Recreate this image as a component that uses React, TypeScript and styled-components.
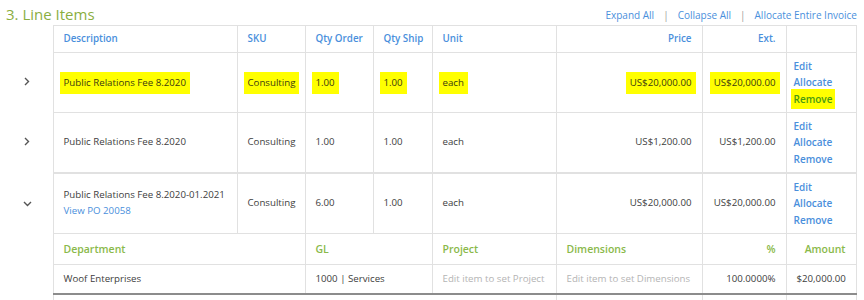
import React from 'react';
import styled, { createGlobalStyle } from 'styled-components';

const Global = createGlobalStyle`
  html, body { margin: 0; padding: 0; background: #fff; }
  body {
    font-family: "Open Sans", "Noto Sans", sans-serif;
    color: #3d3d3d;
    width: 864px;
    height: 300px;
    overflow: hidden;
  }
`;

const Page = styled.div`
  width: 864px;
`;

const TitleBar = styled.div`
  display: flex;
  justify-content: space-between;
  align-items: flex-end;
  height: 25px;
  padding: 0 7px 0 6px;
  box-sizing: border-box;
`;

const Title = styled.h2`
  margin: 0;
  font-size: 15px;
  font-weight: 400;
  line-height: 20px;
  color: #8aae3f;
  padding-bottom: 1px;
`;

const Links = styled.div`
  display: flex;
  gap: 9px;
  font-size: 10px;
  line-height: 14px;
  color: #4a8fdc;
  padding-bottom: 3px;
`;

const Sep = styled.span`
  color: #9a9a9a;
`;

const Table = styled.table`
  border-collapse: collapse;
  table-layout: fixed;
  width: 856px;
  font-size: 9.7px;
`;

const BORDER = '#e1e1e1';

const ToggleCell = styled.td`
  border: none;
  padding: 0 0 0 2px;
  text-align: center;
  vertical-align: middle;
`;

const Th = styled.th<{ $right?: boolean }>`
  height: 26px;
  padding: 0 10px;
  border: 1px solid ${BORDER};
  color: #4a8fdc;
  font-weight: 600;
  font-size: 9.8px;
  white-space: nowrap;
  line-height: 14px;
  text-align: ${(p) => (p.$right ? 'right' : 'left')};
  vertical-align: middle;
`;

const Row = styled.tr<{ $heavy?: boolean; $h: number }>`
  height: ${(p) => p.$h}px;
  & > td:not(:first-child) {
    border-bottom: ${(p) => (p.$heavy ? `2px solid ${BORDER}` : `1px solid ${BORDER}`)};
  }
`;

const Td = styled.td<{ $right?: boolean }>`
  padding: 0 10px;
  border: 1px solid ${BORDER};
  text-align: ${(p) => (p.$right ? 'right' : 'left')};
  vertical-align: middle;
  line-height: 16px;
  white-space: nowrap;
`;

const ActionsTd = styled.td`
  padding: 0 7px;
  border: 1px solid ${BORDER};
  vertical-align: middle;
`;

const ActionList = styled.div`
  display: flex;
  flex-direction: column;
  align-items: flex-start;
  font-size: 10px;
  line-height: 16.5px;
  font-weight: 600;
`;

const ActionLink = styled.span<{ $marked?: boolean }>`
  color: ${(p) => (p.$marked ? '#4a9a12' : '#4a8fdc')};
  ${(p) =>
    p.$marked
      ? `background: #ffff00; padding: 2px 3px; margin: -2px -3px;`
      : ''}
`;

const Mark = styled.span`
  display: inline-block;
  background: #ffff00;
  padding: 3px 4px;
  margin: 0 -4px;
  color: #3a3a12;
`;

const Link = styled.div`
  color: #4a8fdc;
`;

const AllocRow = styled.tr<{ $h: number; $last?: boolean }>`
  height: ${(p) => p.$h}px;
  & > td:not(:first-child) {
    border-bottom: ${(p) => (p.$last ? '2px solid #8c8c8c' : `1px solid ${BORDER}`)};
  }
`;

const AllocHead = styled.td<{ $right?: boolean }>`
  padding: 0 10px;
  border: 1px solid ${BORDER};
  color: #8ab94a;
  font-weight: 600;
  font-size: 10.5px;
  text-align: ${(p) => (p.$right ? 'right' : 'left')};
  vertical-align: middle;
`;

const AllocCell = styled.td<{ $right?: boolean; $muted?: boolean }>`
  padding: 0 10px;
  border: 1px solid ${BORDER};
  color: ${(p) => (p.$muted ? '#b4b4b4' : '#3d3d3d')};
  text-align: ${(p) => (p.$right ? 'right' : 'left')};
  vertical-align: middle;
  white-space: nowrap;
`;

const StubRow = styled.tr`
  height: 8px;
`;

const StubCell = styled.td`
  border-left: 1px solid ${BORDER};
  border-right: 1px solid ${BORDER};
  padding: 0;
`;

const Chevron = ({ down }: { down?: boolean }) =>
  down ? (
    <svg width="9" height="6" viewBox="0 0 9 6">
      <path d="M1 1 L4.5 4.5 L8 1" fill="none" stroke="#555" strokeWidth="1.4" />
    </svg>
  ) : (
    <svg width="6" height="9" viewBox="0 0 6 9">
      <path d="M1 1 L4.5 4.5 L1 8" fill="none" stroke="#555" strokeWidth="1.4" />
    </svg>
  );

const Actions = ({ marked }: { marked?: boolean }) => (
  <ActionList>
    <ActionLink>Edit</ActionLink>
    <ActionLink>Allocate</ActionLink>
    <ActionLink $marked={marked}>Remove</ActionLink>
  </ActionList>
);

export default function App() {
  return (
    <Page>
      <Global />
      <TitleBar>
        <Title>3. Line Items</Title>
        <Links>
          <span>Expand All</span>
          <Sep>|</Sep>
          <span>Collapse All</span>
          <Sep>|</Sep>
          <span>Allocate Entire Invoice</span>
        </Links>
      </TitleBar>
      <Table>
        <colgroup>
          <col style={{ width: 53 }} />
          <col style={{ width: 184 }} />
          <col style={{ width: 68 }} />
          <col style={{ width: 68 }} />
          <col style={{ width: 59 }} />
          <col style={{ width: 124 }} />
          <col style={{ width: 146 }} />
          <col style={{ width: 84 }} />
          <col style={{ width: 70 }} />
        </colgroup>
        <thead>
          <tr>
            <ToggleCell />
            <Th>Description</Th>
            <Th>SKU</Th>
            <Th>Qty Order</Th>
            <Th>Qty Ship</Th>
            <Th>Unit</Th>
            <Th $right>Price</Th>
            <Th $right>Ext.</Th>
            <Th />
          </tr>
        </thead>
        <tbody>
          <Row $h={60}>
            <ToggleCell>
              <Chevron />
            </ToggleCell>
            <Td>
              <Mark>Public Relations Fee 8.2020</Mark>
            </Td>
            <Td>
              <Mark>Consulting</Mark>
            </Td>
            <Td>
              <Mark>1.00</Mark>
            </Td>
            <Td>
              <Mark>1.00</Mark>
            </Td>
            <Td>
              <Mark>each</Mark>
            </Td>
            <Td $right>
              <Mark>US$20,000.00</Mark>
            </Td>
            <Td $right>
              <Mark>US$20,000.00</Mark>
            </Td>
            <ActionsTd>
              <Actions marked />
            </ActionsTd>
          </Row>
          <Row $h={60} $heavy>
            <ToggleCell>
              <Chevron />
            </ToggleCell>
            <Td>Public Relations Fee 8.2020</Td>
            <Td>Consulting</Td>
            <Td>1.00</Td>
            <Td>1.00</Td>
            <Td>each</Td>
            <Td $right>US$1,200.00</Td>
            <Td $right>US$1,200.00</Td>
            <ActionsTd>
              <Actions />
            </ActionsTd>
          </Row>
          <Row $h={61}>
            <ToggleCell>
              <Chevron down />
            </ToggleCell>
            <Td>
              <div>Public Relations Fee 8.2020-01.2021</div>
              <Link>View PO 20058</Link>
            </Td>
            <Td>Consulting</Td>
            <Td>6.00</Td>
            <Td>1.00</Td>
            <Td>each</Td>
            <Td $right>US$20,000.00</Td>
            <Td $right>US$20,000.00</Td>
            <ActionsTd>
              <Actions />
            </ActionsTd>
          </Row>
          <AllocRow $h={31}>
            <ToggleCell />
            <AllocHead colSpan={2}>Department</AllocHead>
            <AllocHead colSpan={2}>GL</AllocHead>
            <AllocHead>Project</AllocHead>
            <AllocHead>Dimensions</AllocHead>
            <AllocHead $right>%</AllocHead>
            <AllocHead $right>Amount</AllocHead>
          </AllocRow>
          <AllocRow $h={29} $last>
            <ToggleCell />
            <AllocCell colSpan={2}>Woof Enterprises</AllocCell>
            <AllocCell colSpan={2}>1000 | Services</AllocCell>
            <AllocCell $muted>Edit item to set Project</AllocCell>
            <AllocCell $muted>Edit item to set Dimensions</AllocCell>
            <AllocCell $right>100.0000%</AllocCell>
            <AllocCell $right>$20,000.00</AllocCell>
          </AllocRow>
          <StubRow>
            <ToggleCell />
            <StubCell colSpan={5} />
            <StubCell />
            <StubCell />
            <StubCell />
          </StubRow>
        </tbody>
      </Table>
    </Page>
  );
}
